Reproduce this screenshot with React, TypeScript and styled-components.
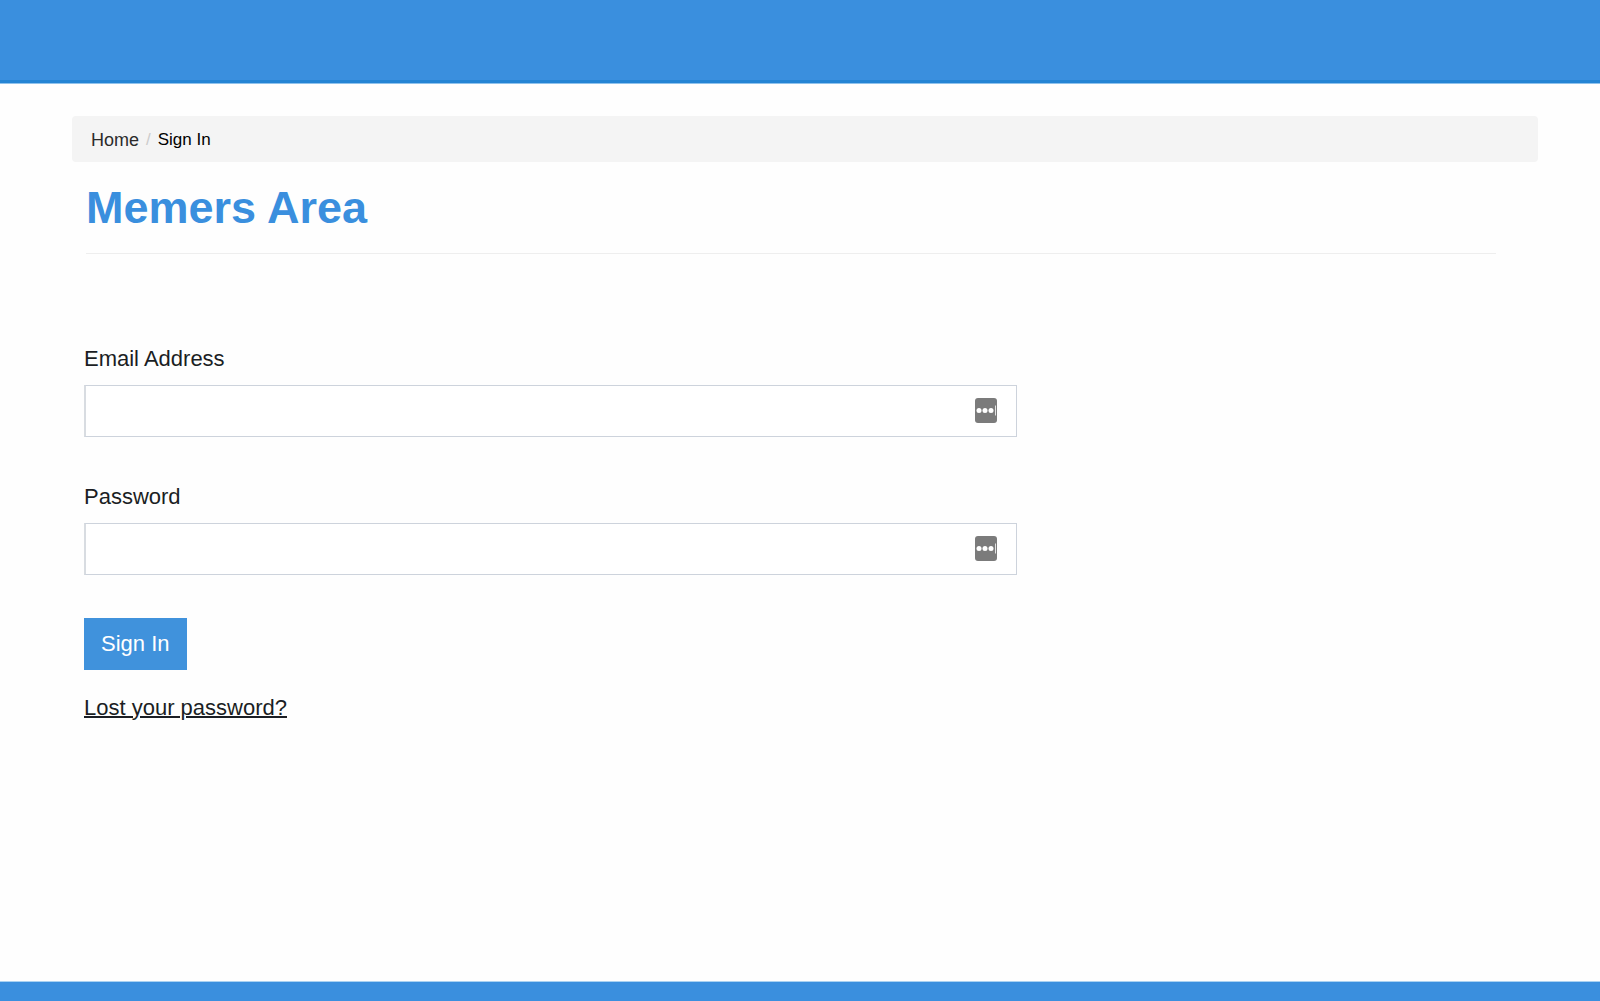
import React from "react";
import styled, { createGlobalStyle } from "styled-components";

const GlobalStyle = createGlobalStyle`
  *, *::before, *::after { box-sizing: border-box; }
  body {
    margin: 0;
    background: #fefefe;
    color: #1b1e24;
    font-family: "Liberation Sans", Arial, Helvetica, sans-serif;
    font-size: 22px;
    line-height: 26px;
  }
`;

const Page = styled.div`
  display: flex;
  flex-direction: column;
  min-height: 100vh;
`;

const Header = styled.header`
  height: 83px;
  background: #3a8fde;
  border-bottom: 3px solid #2484d4;
  box-shadow: 0 1px 0 #8fc2ec;
`;

const Main = styled.main`
  flex: 1;
  padding: 33px 62px 32px 72px;
`;

const Breadcrumb = styled.nav`
  display: flex;
  align-items: center;
  gap: 7px;
  height: 46px;
  padding: 2px 19px 0;
  border-radius: 4px;
  background: #f4f4f4;
  font-size: 17px;
`;

const HomeLink = styled.a`
  color: #2b2b2b;
  font-size: 18px;
  text-decoration: none;
`;

const Separator = styled.span`
  color: #cccccc;
`;

const Current = styled.span`
  color: #000000;
`;

const Title = styled.h1`
  margin: 0 42px 0 14px;
  padding: 19px 0;
  border-bottom: 1px solid #eeeeee;
  color: #3a8fde;
  font-size: 45px;
  line-height: 53px;
`;

const Form = styled.form`
  display: flex;
  flex-direction: column;
  align-items: flex-start;
  width: calc(64% + 7px);
  padding: 92px 0 0 12px;
`;

const Fields = styled.div`
  display: grid;
  gap: 47px;
  width: 100%;
  margin-bottom: 43px;
`;

const Label = styled.label`
  display: block;
  margin-bottom: 13px;
`;

const InputBox = styled.div`
  position: relative;
`;

const Input = styled.input`
  display: block;
  width: 100%;
  height: 52px;
  padding: 0 56px 0 16px;
  border: 1px solid #cdd3dc;
  border-left: 2px solid #d8dce1;
  border-radius: 0;
  background: #ffffff;
  color: inherit;
  font: inherit;
`;

const FillButton = styled.button`
  position: absolute;
  top: 13px;
  right: 20px;
  width: 22px;
  height: 25px;
  padding: 0;
  border: 0;
  border-radius: 3px;
  background: #7b7b7b;
  cursor: pointer;

  svg { display: block; }
`;

const Submit = styled.button`
  height: 52px;
  padding: 0 17px;
  border: 0;
  background: #4092dc;
  color: #ffffff;
  font: inherit;
  cursor: pointer;
`;

const LostLink = styled.a`
  margin-top: 25px;
  color: inherit;
  text-decoration: underline;
  text-decoration-thickness: 2px;
  text-underline-offset: 1px;
`;

const Footer = styled.footer`
  height: 20px;
  border-top: 1px solid #a9d2f2;
  background: #3a8fde;
`;

type CredentialFieldProps = {
  id: string;
  label: string;
  type: string;
};

function CredentialField({ id, label, type }: CredentialFieldProps) {
  return (
    <div>
      <Label htmlFor={id}>{label}</Label>
      <InputBox>
        <Input id={id} name={id} type={type} />
        <FillButton type="button" aria-label={"Fill " + label}>
          <svg width="22" height="25" viewBox="0 0 22 25" aria-hidden="true">
            <circle cx="4" cy="12.5" r="2.5" fill="#fff" />
            <circle cx="10" cy="12.5" r="2.5" fill="#fff" />
            <circle cx="16" cy="12.5" r="2.5" fill="#fff" />
            <path d="M20.5 7.5v10" stroke="#e4e4e4" strokeWidth="1" />
          </svg>
        </FillButton>
      </InputBox>
    </div>
  );
}

export default function App() {
  return (
    <Page>
      <GlobalStyle />
      <Header />
      <Main>
        <Breadcrumb aria-label="Breadcrumb">
          <HomeLink href="#home">Home</HomeLink>
          <Separator aria-hidden="true">/</Separator>
          <Current aria-current="page">Sign In</Current>
        </Breadcrumb>
        <Title>Memers Area</Title>
        <Form onSubmit={(event) => event.preventDefault()}>
          <Fields>
            <CredentialField id="email" label="Email Address" type="email" />
            <CredentialField id="password" label="Password" type="password" />
          </Fields>
          <Submit type="submit">Sign In</Submit>
          <LostLink href="#lost-password">Lost your password?</LostLink>
        </Form>
      </Main>
      <Footer />
    </Page>
  );
}
